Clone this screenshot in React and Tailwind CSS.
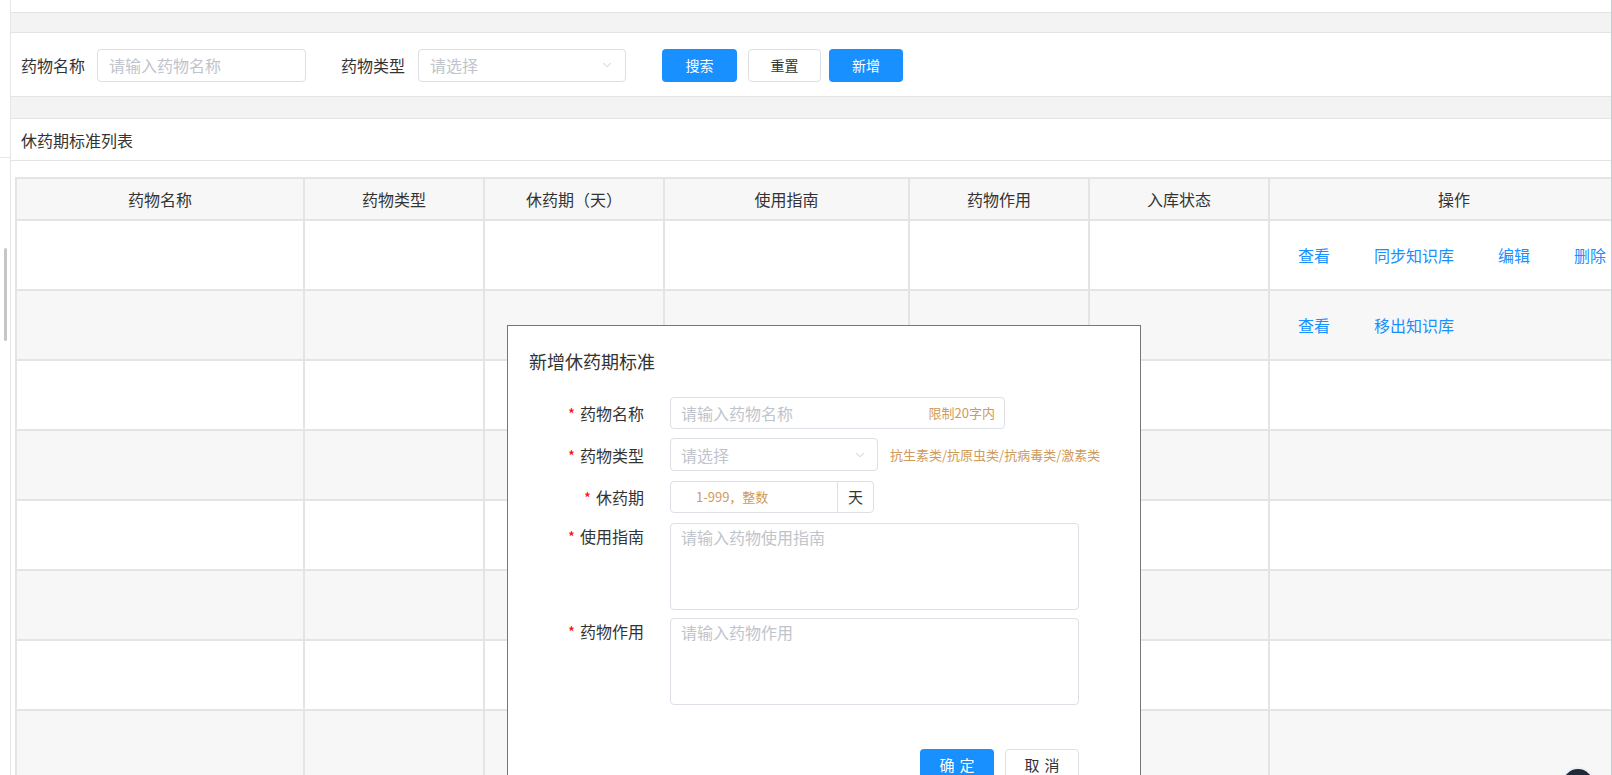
import React from "react";
import { ChevronDown } from "lucide-react";

const cols = ["药物名称", "药物类型", "休药期（天）", "使用指南", "药物作用", "入库状态", "操作"];

const rows = [
  { ops: ["查看", "同步知识库", "编辑", "删除"] },
  { ops: ["查看", "移出知识库"] },
  { ops: [] },
  { ops: [] },
  { ops: [] },
  { ops: [] },
  { ops: [] },
  { ops: [] },
];

const FormLabel = ({ children, top }) => (
  <div className={`w-[136px] shrink-0 text-right text-[16px] text-[#333] h-[32px] leading-[32px] ${top ? "-mt-[3px]" : ""}`}>
    <span className="text-[#f00] text-[15px] mr-[5px]">*</span>
    {children}
  </div>
);

export default function App() {
  return (
    <div className="relative w-[1612px] h-[775px] overflow-hidden bg-white flex font-['Noto_Sans_CJK_SC','Noto_Sans',sans-serif]">
      {/* 左侧窄栏 */}
      <aside className="relative w-[11px] shrink-0 border-r border-[#e6e6e6]">
        <div className="absolute left-0 top-[157px] w-full border-t border-[#e6e6e6]" />
        <div className="absolute left-[4px] top-[248px] w-[3px] h-[93px] rounded bg-[#c6c6c6]" />
      </aside>

      <main className="flex-1 flex flex-col overflow-hidden">
        <div className="h-[12px] shrink-0" />
        <div className="h-[21px] shrink-0 bg-[#f3f3f3] border-y border-[#e3e3e3]" />

        {/* 搜索栏 */}
        <div className="h-[63px] shrink-0 flex items-center pl-[10px] pt-[1px]">
          <span className="text-[16px] text-[#333] mr-[12px]">药物名称</span>
          <div className="w-[209px] h-[33px] border border-[#dcdfe6] rounded-[4px] flex items-center px-[11px] text-[16px] text-[#c0c4cc]">
            请输入药物名称
          </div>
          <span className="text-[16px] text-[#333] ml-[35px] mr-[13px]">药物类型</span>
          <div className="w-[208px] h-[33px] border border-[#dcdfe6] rounded-[4px] flex items-center justify-between px-[11px] text-[16px] text-[#c0c4cc]">
            请选择
            <ChevronDown size={14} strokeWidth={1.5} className="text-[#c0c4cc]" />
          </div>
          <button className="ml-[36px] w-[75px] h-[33px] rounded-[4px] bg-[#1890ff] text-white text-[14px]">搜索</button>
          <button className="ml-[11px] w-[73px] h-[33px] rounded-[4px] border border-[#dcdfe6] bg-white text-[#333] text-[14px]">重置</button>
          <button className="ml-[8px] w-[74px] h-[33px] rounded-[4px] bg-[#1890ff] text-white text-[14px]">新增</button>
        </div>

        <div className="h-[23px] shrink-0 bg-[#f3f3f3] border-y border-[#e3e3e3]" />

        {/* 列表标题 */}
        <div className="h-[42px] shrink-0 flex items-center pl-[10px] border-b border-[#e3e3e3] text-[16px] text-[#333]">
          休药期标准列表
        </div>

        {/* 表格 */}
        <div className="mt-[16px] ml-[4px] w-[1623px] border-t-2 border-l-2 border-[#e4e4e4] grid grid-cols-[288px_180px_180px_245px_180px_180px_370px] text-[16px]">
          {cols.map((c) => (
            <div key={c} className="h-[42px] bg-[#f7f7f7] border-r-2 border-b-2 border-[#e4e4e4] flex items-center justify-center text-[#333]">
              {c}
            </div>
          ))}
          {rows.map((r, i) => (
            <React.Fragment key={i}>
              {cols.map((c, j) => (
                <div
                  key={c}
                  className={`h-[70px] border-r-2 border-b-2 border-[#e4e4e4] ${i % 2 === 1 ? "bg-[#f7f7f7]" : "bg-white"} ${j === 6 ? "flex items-center pl-[28px] gap-[44px] text-[#1890ff]" : ""}`}
                >
                  {j === 6 && r.ops.map((o) => <span key={o}>{o}</span>)}
                </div>
              ))}
            </React.Fragment>
          ))}
        </div>
      </main>

      <div className="w-[1px] shrink-0 bg-[#c9cbd3]" />

      {/* 新增弹窗 */}
      <div className="absolute left-[507px] top-[325px] w-[634px] h-[470px] bg-white border border-[#777]">
        <div className="pl-[21px] pt-[23px] text-[18px] text-[#333] leading-[24px]">新增休药期标准</div>

        <div className="mt-[24px] flex flex-col">
          <div className="flex items-center">
            <FormLabel>药物名称</FormLabel>
            <div className="ml-[26px] w-[335px] h-[32px] border border-[#dcdfe6] rounded-[4px] flex items-center justify-between pl-[10px] pr-[9px]">
              <span className="text-[16px] text-[#c0c4cc]">请输入药物名称</span>
              <span className="text-[13px] text-[#cf9a5a]">限制20字内</span>
            </div>
          </div>

          <div className="mt-[9px] flex items-center">
            <FormLabel>药物类型</FormLabel>
            <div className="ml-[26px] w-[208px] h-[33px] border border-[#dcdfe6] rounded-[4px] flex items-center justify-between pl-[10px] pr-[10px]">
              <span className="text-[16px] text-[#c0c4cc]">请选择</span>
              <ChevronDown size={14} strokeWidth={1.5} className="text-[#c0c4cc]" />
            </div>
            <span className="ml-[12px] text-[13px] text-[#cf9a5a]">抗生素类/抗原虫类/抗病毒类/激素类</span>
          </div>

          <div className="mt-[10px] flex items-center">
            <FormLabel>休药期</FormLabel>
            <div className="ml-[26px] w-[204px] h-[32px] border border-[#dcdfe6] rounded-[4px] flex">
              <div className="flex-1 flex items-center pl-[25px] text-[13px] text-[#cf9a5a]">1-999，整数</div>
              <div className="w-[36px] border-l border-[#dcdfe6] flex items-center justify-center text-[15px] text-[#333]">天</div>
            </div>
          </div>

          <div className="mt-[10px] flex items-start">
            <FormLabel top>使用指南</FormLabel>
            <div className="ml-[26px] w-[409px] h-[87px] border border-[#dcdfe6] rounded-[4px] pl-[10px] pt-[1px] text-[16px] text-[#c0c4cc]">
              请输入药物使用指南
            </div>
          </div>

          <div className="mt-[8px] flex items-start">
            <FormLabel top>药物作用</FormLabel>
            <div className="ml-[26px] w-[409px] h-[87px] border border-[#dcdfe6] rounded-[4px] pl-[10px] pt-[1px] text-[16px] text-[#c0c4cc]">
              请输入药物作用
            </div>
          </div>

          <div className="mt-[44px] w-[571px] flex justify-end gap-[11px]">
            <button className="w-[74px] h-[32px] rounded-[4px] bg-[#1890ff] text-white text-[15px] tracking-[5px] pl-[5px]">确定</button>
            <button className="w-[74px] h-[32px] rounded-[4px] border border-[#dcdfe6] bg-white text-[#333] text-[15px] tracking-[5px] pl-[5px]">取消</button>
          </div>
        </div>
      </div>

      <div className="absolute left-[1563px] top-[769px] w-[30px] h-[30px] rounded-full bg-[#1f2b3a] ring-2 ring-[#eef0f3]" />
    </div>
  );
}
